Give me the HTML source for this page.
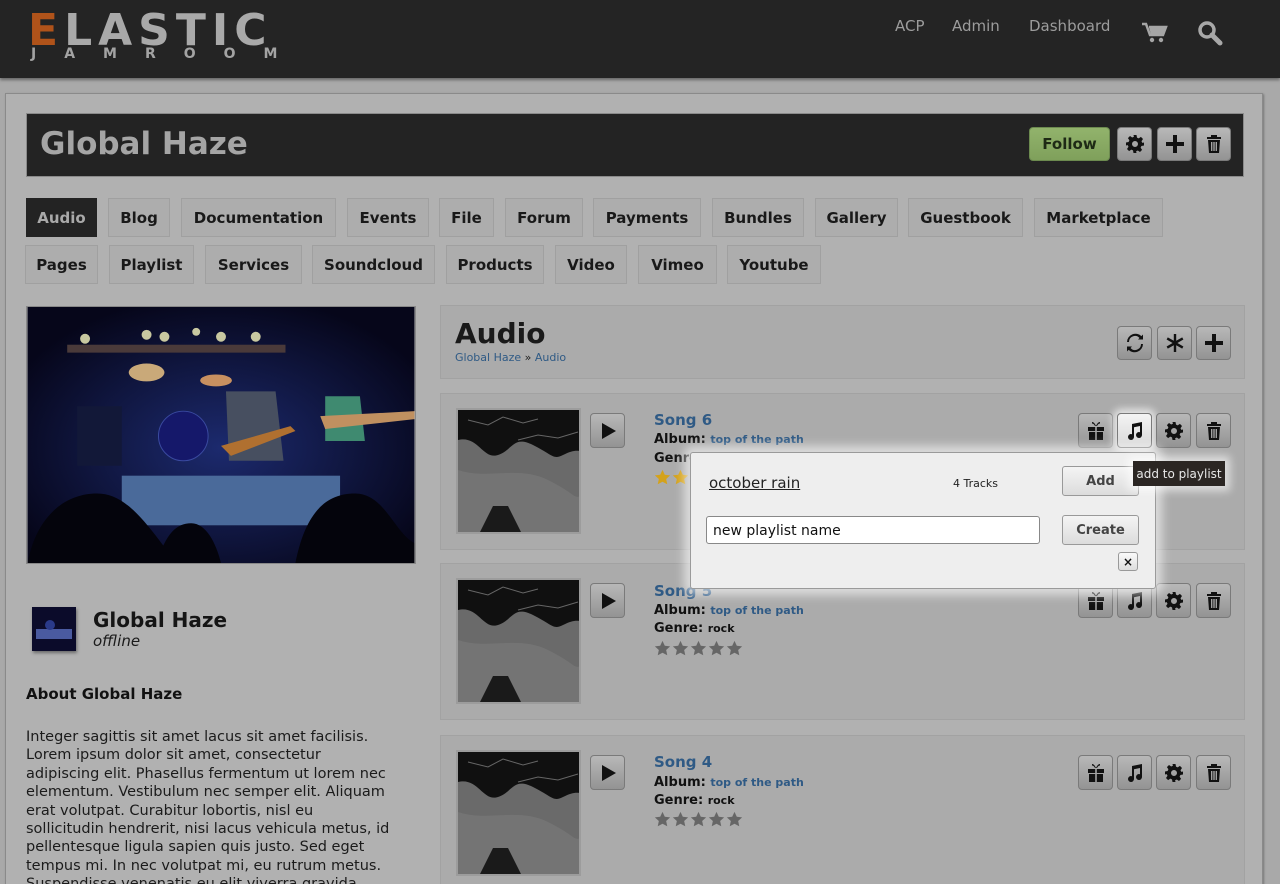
<!DOCTYPE html>
<html><head><meta charset="utf-8">
<style>
*{margin:0;padding:0;box-sizing:border-box}
html,body{width:1280px;height:884px;overflow:hidden}
body{background:#a9a9a9;font-family:"DejaVu Sans","Liberation Sans",sans-serif;position:relative;color:#111}
.abs{position:absolute}
#hdr{left:0;top:0;width:1280px;height:78px;background:#242424;box-shadow:0 2px 3px rgba(0,0,0,.4)}
.logo1{left:28px;top:5px;font:bold 44px "DejaVu Sans",sans-serif;letter-spacing:6px;color:#a9a9a9}
.logo1 b{color:#b0531a}
.logo2{left:31px;top:46px;font:bold 14px "DejaVu Sans",sans-serif;color:#a3a3a3}
.nav{top:17px;font-size:15px;color:#9c9c9c}
#frame{left:5px;top:93px;width:1258px;height:800px;background:#b1b1b1;border:1px solid #8a8a8a;box-shadow:1px 1px 2px rgba(0,0,0,.3)}
#title{left:26px;top:113px;width:1218px;height:64px;background:#232323;border:1px solid #8a8a8a}
#title h1{position:absolute;left:13px;top:12px;font:bold 31px "DejaVu Sans",sans-serif;color:#a5a5a5}
.btn{position:absolute;width:35px;height:35px;border:1px solid #7a7a7a;border-radius:4px;background:linear-gradient(#b8b8b8,#939393);display:flex;align-items:center;justify-content:center}
.btn svg{width:20px;height:20px}
.tab{position:absolute;height:40px;border:1px solid #a0a0a0;background:#adadad;font:bold 15px "DejaVu Sans",sans-serif;color:#191919;display:flex;align-items:center;justify-content:center}
.tab.on{background:#232323;color:#a9a9a9;border-color:#232323}
.box{position:absolute;background:#ababab;border:1px solid #a2a2a2}
.thumb{position:absolute;width:125px;height:126px;border:2px solid #9c9c9c;background:#111;overflow:hidden}
.song{position:absolute;font:bold 15px "DejaVu Sans",sans-serif;color:#2f5a85}
.lab{position:absolute;font:bold 13px "DejaVu Sans",sans-serif;color:#111}
.lab span{color:#2f5a85;font-size:11px}
.lab i{font-style:normal;font-size:11px}
.stars{position:absolute;display:flex;gap:1px}
.stars svg{width:17px;height:17px}
p.about{left:26px;top:728px;white-space:nowrap;font-size:14.5px;line-height:18.4px;color:#1b1b1b}
</style></head><body>
<svg width="0" height="0" style="position:absolute">
<defs>
<symbol id="gear" viewBox="0 0 20 20"><path d="M8.5 1h3l.5 2.6 1.7.8 2.2-1.5 2.1 2.1-1.5 2.2.8 1.7L19 8.5v3l-2.6.5-.8 1.7 1.5 2.2-2.1 2.1-2.2-1.5-1.7.8L11.5 19h-3l-.5-2.6-1.7-.8-2.2 1.5-2.1-2.1 1.5-2.2-.8-1.7L1 11.5v-3l2.6-.5.8-1.700-1.5-2.2 2.1-2.1 2.2 1.5 1.7-.8zM10 7a3 3 0 100 6 3 3 0 000-6z" fill="#111" fill-rule="evenodd"/></symbol>
<symbol id="trash" viewBox="0 0 20 20"><path d="M7 1h6v2h4v2H3V3h4zM4 6h12l-1 13H5zM7 8v9h1.4V8zm2.3 0v9h1.4V8zm2.3 0v9H13V8z" fill="#111" fill-rule="evenodd"/></symbol>
<symbol id="plus" viewBox="0 0 20 20"><path d="M8 1h4v7h7v4h-7v7H8v-7H1V8h7z" fill="#111"/></symbol>
<symbol id="gift" viewBox="0 0 20 20"><path d="M6 1c2 0 3 2 4 4 1-2 2-4 4-4v1.5c-1.5 0-2.5 1.5-3 2.5H9C8.5 4 7.5 2.5 6 2.5zM2 6h7.2v4H2zm8.8 0H18v4h-7.2zM3 11h6.2v8H3zm7.8 0H17v8h-6.2z" fill="#111"/></symbol>
<symbol id="note" viewBox="0 0 20 20"><path d="M7 3l10-2v13a3 3 0 11-2-2.8V5L9 6.2V16a3 3 0 11-2-2.8z" fill="#111"/></symbol>
<symbol id="play" viewBox="0 0 20 20"><path d="M4 2l14 8-14 8z" fill="#111"/></symbol>
<symbol id="ref" viewBox="0 0 20 20"><path d="M4 9a6 6 0 0110.5-4L13 6.5h5v-5l-1.6 1.6A8.5 8.5 0 002 9zM16 11a6 6 0 01-10.5 4L7 13.5H2v5l1.6-1.6A8.5 8.5 0 0018 11z" fill="#111"/></symbol>
<symbol id="ast" viewBox="0 0 20 20"><path d="M8.8 1h2.4v6.8l6-3.4 1.2 2.1-6 3.5 6 3.5-1.2 2.1-6-3.4V19H8.8v-6.8l-6 3.4-1.2-2.1 6-3.5-6-3.5 1.2-2.1 6 3.4z" fill="#111"/></symbol>
<symbol id="star" viewBox="0 0 20 20"><path d="M10 1l2.7 5.8 6.3.7-4.7 4.3 1.3 6.2L10 15l-5.6 3 1.3-6.2L1 7.5l6.3-.7z"/></symbol>
<symbol id="art" viewBox="0 0 125 126"><rect width="125" height="126" fill="#101010"/><path d="M0 30c20-5 25 20 40 15s15-20 35-10 20 15 30 10 15-5 20-3V126H0z" fill="#6a6a6a"/><path d="M0 60c30 10 60-5 90 10s25 20 35 15V126H0z" fill="#7b7b7b" opacity=".6"/><path d="M20 126l15-30h15l15 30z" fill="#1a1a1a"/><path d="M10 10l20 5 15-8 20 6 15-4M60 30l20-5 20 3 20-6" stroke="#666" fill="none"/></symbol>
</defs></svg>

<div id="hdr" class="abs"></div>
<div class="abs logo1"><b>E</b>LASTIC</div>
<div class="abs logo2" style="letter-spacing:28px">JAMROOM</div>
<div class="abs nav" style="left:895px">ACP</div>
<div class="abs nav" style="left:952px">Admin</div>
<div class="abs nav" style="left:1029px">Dashboard</div>
<svg class="abs" style="left:1142px;top:22px" width="26" height="22" viewBox="0 0 26 22"><path d="M0 2h4l4 11h13l3-8H7" fill="none" stroke="#a5a5a5" stroke-width="2.5"/><path d="M7 5h17l-3 8H9z" fill="#a5a5a5"/><circle cx="10" cy="18" r="2.2" fill="#a5a5a5"/><circle cx="19" cy="18" r="2.2" fill="#a5a5a5"/></svg>
<svg class="abs" style="left:1197px;top:20px" width="26" height="26" viewBox="0 0 26 26"><circle cx="10" cy="10" r="7" fill="none" stroke="#a8a8a8" stroke-width="3.5"/><path d="M15 15l8 8" stroke="#a8a8a8" stroke-width="5" stroke-linecap="round"/></svg>

<div id="frame" class="abs"></div>
<div id="title" class="abs"><h1>Global Haze</h1></div>
<div class="abs" style="left:1029px;top:127px;width:81px;height:34px;border-radius:4px;border:1px solid #6c8a4f;background:linear-gradient(#92b36c,#7fa05b);font:bold 15px 'DejaVu Sans',sans-serif;color:#1e2a15;display:flex;align-items:center;justify-content:center">Follow</div>
<div class="btn" style="left:1117px;top:127px;height:34px"><svg><use href="#gear"/></svg></div>
<div class="btn" style="left:1157px;top:127px;height:34px"><svg><use href="#plus"/></svg></div>
<div class="btn" style="left:1196px;top:127px;height:34px"><svg><use href="#trash"/></svg></div>

<div class="tab on" style="left:26px;top:198px;width:71px;height:39px">Audio</div>
<div class="tab" style="left:108px;top:198px;width:62px;height:39px">Blog</div>
<div class="tab" style="left:181px;top:198px;width:155px;height:39px">Documentation</div>
<div class="tab" style="left:347px;top:198px;width:82px;height:39px">Events</div>
<div class="tab" style="left:439px;top:198px;width:55px;height:39px">File</div>
<div class="tab" style="left:505px;top:198px;width:78px;height:39px">Forum</div>
<div class="tab" style="left:593px;top:198px;width:108px;height:39px">Payments</div>
<div class="tab" style="left:712px;top:198px;width:92px;height:39px">Bundles</div>
<div class="tab" style="left:815px;top:198px;width:83px;height:39px">Gallery</div>
<div class="tab" style="left:908px;top:198px;width:115px;height:39px">Guestbook</div>
<div class="tab" style="left:1034px;top:198px;width:129px;height:39px">Marketplace</div>
<div class="tab" style="left:25px;top:245px;width:73px;height:39px">Pages</div>
<div class="tab" style="left:109px;top:245px;width:85px;height:39px">Playlist</div>
<div class="tab" style="left:205px;top:245px;width:97px;height:39px">Services</div>
<div class="tab" style="left:312px;top:245px;width:123px;height:39px">Soundcloud</div>
<div class="tab" style="left:446px;top:245px;width:98px;height:39px">Products</div>
<div class="tab" style="left:555px;top:245px;width:72px;height:39px">Video</div>
<div class="tab" style="left:638px;top:245px;width:79px;height:39px">Vimeo</div>
<div class="tab" style="left:727px;top:245px;width:94px;height:39px">Youtube</div>

<svg class="abs" style="left:26px;top:306px;border:1px solid #888" width="390" height="258" viewBox="0 0 390 258">
<defs><radialGradient id="g1" cx=".5" cy=".55" r=".6"><stop offset="0" stop-color="#1c2a6e"/><stop offset="1" stop-color="#06061a"/></radialGradient></defs>
<rect width="390" height="258" fill="url(#g1)"/>
<rect x="40" y="38" width="220" height="8" fill="#4a3a3a"/>
<g fill="#c8c8a0"><circle cx="58" cy="32" r="5"/><circle cx="120" cy="28" r="5"/><circle cx="138" cy="30" r="5"/><circle cx="195" cy="30" r="5"/><circle cx="230" cy="30" r="5"/><circle cx="170" cy="25" r="4"/></g>
<rect x="95" y="170" width="220" height="50" fill="#4a6a9a"/>
<ellipse cx="120" cy="66" rx="18" ry="9" fill="#c9a979"/><ellipse cx="190" cy="74" rx="16" ry="6" fill="#c89060"/>
<circle cx="157" cy="130" r="25" fill="#15186a" stroke="#3a4aa0"/>
<path d="M200 85h50l8 70h-55z" fill="#474f60"/><path d="M195 140l70-20 5 5-65 25z" fill="#b07030"/>
<path d="M300 90h35l5 45h-40z" fill="#3f8a70"/><path d="M295 110l95-5v8l-90 10z" fill="#c09060"/>
<path d="M50 100h45v60H50z" fill="#121838"/>
<path d="M0 258c10-50 40-70 70-70s50 30 80 70zM130 258c10-30 20-40 35-40s25 20 30 40zM270 258c10-50 30-70 60-70s40 40 60 50v20z" fill="#04040c"/>
</svg>

<svg class="abs" style="left:32px;top:607px;box-shadow:1px 2px 3px rgba(0,0,0,.4)" width="44" height="44" viewBox="0 0 44 44"><rect width="44" height="44" fill="#0b0b2a"/><rect x="4" y="22" width="36" height="10" fill="#4a5aa0"/><circle cx="18" cy="18" r="5" fill="#2a3a8a"/></svg>
<div class="abs" style="left:93px;top:608px;font:bold 20px 'DejaVu Sans',sans-serif;color:#151515">Global Haze</div>
<div class="abs" style="left:93px;top:632px;font:italic 15px 'DejaVu Sans',sans-serif;color:#1a1a1a">offline</div>
<div class="abs" style="left:26px;top:685px;font:bold 15px 'DejaVu Sans',sans-serif;color:#111">About Global Haze</div>
<p class="abs about">Integer sagittis sit amet lacus sit amet facilisis.<br>Lorem ipsum dolor sit amet, consectetur<br>adipiscing elit. Phasellus fermentum ut lorem nec<br>elementum. Vestibulum nec semper elit. Aliquam<br>erat volutpat. Curabitur lobortis, nisl eu<br>sollicitudin hendrerit, nisi lacus vehicula metus, id<br>pellentesque ligula sapien quis justo. Sed eget<br>tempus mi. In nec volutpat mi, eu rutrum metus.<br>Suspendisse venenatis eu elit viverra gravida.</p>

<div class="box" style="left:440px;top:305px;width:805px;height:74px"></div>
<div class="abs" style="left:455px;top:317px;font:bold 28px 'DejaVu Sans',sans-serif;color:#1a1a1a">Audio</div>
<div class="abs" style="left:455px;top:351px;font-size:11px;color:#2f5a85">Global Haze <span style="color:#222">»</span> Audio</div>
<div class="btn" style="left:1117px;top:326px;height:34px"><svg><use href="#ref"/></svg></div>
<div class="btn" style="left:1157px;top:326px;height:34px"><svg><use href="#ast"/></svg></div>
<div class="btn" style="left:1196px;top:326px;height:34px"><svg><use href="#plus"/></svg></div>

<div class="box" style="left:440px;top:393px;width:805px;height:157px"></div>
<div class="box" style="left:440px;top:563px;width:805px;height:157px"></div>
<div class="box" style="left:440px;top:735px;width:805px;height:160px"></div>

<div class="thumb" style="left:456px;top:408px"><svg width="125" height="126"><use href="#art"/></svg></div>
<div class="thumb" style="left:456px;top:578px"><svg width="125" height="126"><use href="#art"/></svg></div>
<div class="thumb" style="left:456px;top:750px"><svg width="125" height="126"><use href="#art"/></svg></div>
<div class="btn" style="left:590px;top:413px"><svg><use href="#play"/></svg></div>
<div class="btn" style="left:590px;top:583px"><svg><use href="#play"/></svg></div>
<div class="btn" style="left:590px;top:755px"><svg><use href="#play"/></svg></div>

<div class="song" style="left:654px;top:411px">Song 6</div>
<div class="lab" style="left:654px;top:432px">Album: <span>top of the path</span></div>
<div class="lab" style="left:654px;top:451px">Genre:</div>
<div class="stars" style="left:654px;top:469px;fill:#d4a21a"><svg><use href="#star"/></svg><svg><use href="#star"/></svg></div>

<div class="song" style="left:654px;top:582px">Song 5</div>
<div class="lab" style="left:654px;top:603px">Album: <span>top of the path</span></div>
<div class="lab" style="left:654px;top:621px">Genre: <i>rock</i></div>
<div class="stars" style="left:654px;top:640px;fill:#666"><svg><use href="#star"/></svg><svg><use href="#star"/></svg><svg><use href="#star"/></svg><svg><use href="#star"/></svg><svg><use href="#star"/></svg></div>

<div class="song" style="left:654px;top:753px">Song 4</div>
<div class="lab" style="left:654px;top:775px">Album: <span>top of the path</span></div>
<div class="lab" style="left:654px;top:793px">Genre: <i>rock</i></div>
<div class="stars" style="left:654px;top:811px;fill:#666"><svg><use href="#star"/></svg><svg><use href="#star"/></svg><svg><use href="#star"/></svg><svg><use href="#star"/></svg><svg><use href="#star"/></svg></div>

<div class="btn" style="left:1078px;top:413px"><svg><use href="#gift"/></svg></div>
<div class="btn" style="left:1117px;top:413px;background:linear-gradient(#f4f4f4,#d8d8d8);box-shadow:0 0 8px 4px rgba(255,255,255,.7)"><svg><use href="#note"/></svg></div>
<div class="btn" style="left:1156px;top:413px"><svg><use href="#gear"/></svg></div>
<div class="btn" style="left:1196px;top:413px"><svg><use href="#trash"/></svg></div>
<div class="btn" style="left:1078px;top:583px"><svg><use href="#gift"/></svg></div>
<div class="btn" style="left:1117px;top:583px"><svg><use href="#note"/></svg></div>
<div class="btn" style="left:1156px;top:583px"><svg><use href="#gear"/></svg></div>
<div class="btn" style="left:1196px;top:583px"><svg><use href="#trash"/></svg></div>
<div class="btn" style="left:1078px;top:755px"><svg><use href="#gift"/></svg></div>
<div class="btn" style="left:1117px;top:755px"><svg><use href="#note"/></svg></div>
<div class="btn" style="left:1156px;top:755px"><svg><use href="#gear"/></svg></div>
<div class="btn" style="left:1196px;top:755px"><svg><use href="#trash"/></svg></div>

<div class="abs" style="left:690px;top:452px;width:466px;height:137px;background:#eeeeee;border:1px solid #9a9a9a;border-radius:3px;box-shadow:0 0 10px 6px rgba(255,255,255,.6)"></div>
<div class="abs" style="left:709px;top:474px;font-size:15px;color:#222;text-decoration:underline">october rain</div>
<div class="abs" style="left:953px;top:477px;font-size:11px;color:#222">4 Tracks</div>
<div class="abs" style="left:1062px;top:466px;width:77px;height:30px;border:1px solid #999;border-radius:3px;background:linear-gradient(#f4f4f4,#dcdcdc);font:bold 13px 'DejaVu Sans',sans-serif;color:#444;display:flex;align-items:center;justify-content:center">Add</div>
<div class="abs" style="left:706px;top:516px;width:334px;height:28px;border:1px solid #888;border-radius:3px;background:#fff;font-size:14px;color:#111;padding:6px 0 0 6px">new playlist name</div>
<div class="abs" style="left:1062px;top:515px;width:77px;height:30px;border:1px solid #999;border-radius:3px;background:linear-gradient(#f4f4f4,#dcdcdc);font:bold 13px 'DejaVu Sans',sans-serif;color:#444;display:flex;align-items:center;justify-content:center">Create</div>
<div class="abs" style="left:1118px;top:552px;width:20px;height:19px;border:1px solid #999;border-radius:3px;background:linear-gradient(#fafafa,#ddd);font:bold 12px 'DejaVu Sans',sans-serif;color:#111;display:flex;align-items:center;justify-content:center">×</div>
<div class="abs" style="left:1133px;top:461px;width:92px;height:25px;background:#2b2623;color:#e8e8e8;font-size:12px;display:flex;align-items:center;justify-content:center;box-shadow:0 0 8px 5px rgba(255,255,255,.6)">add to playlist</div>
</body></html>
